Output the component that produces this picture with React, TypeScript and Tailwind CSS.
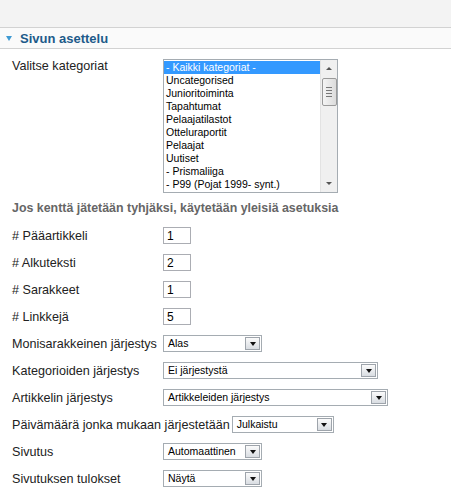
import React from "react";

const categories = [
  "- Kaikki kategoriat -",
  "Uncategorised",
  "Junioritoiminta",
  "Tapahtumat",
  "Pelaajatilastot",
  "Otteluraportit",
  "Pelaajat",
  "Uutiset",
  "- Prismaliiga",
  "- P99 (Pojat 1999- synt.)",
];

function Row({ label, children }: { label: string; children: React.ReactNode }) {
  return (
    <div className="flex h-[27px] items-center pl-3">
      <span className="min-w-[151px] pr-[2px] text-[12.6px] leading-[14px] text-[#222]">{label}</span>
      {children}
    </div>
  );
}

function NumberInput({ value }: { value: string }) {
  return (
    <div className="flex h-[17px] w-[28px] items-center border border-[#abadb3] bg-white pl-[3px] text-[12px] text-black">
      {value}
    </div>
  );
}

function Select({ value, className }: { value: string; className: string }) {
  return (
    <div className={`flex h-[17px] items-center border border-[#a5acb2] bg-white ${className}`}>
      <span className="flex-1 pl-[4px] text-[10.5px] leading-[13px] text-black">{value}</span>
      <span className="mr-[1px] flex h-[13px] w-[15px] items-center justify-center border border-[#9ea4ab] bg-gradient-to-b from-[#fbfbfb] to-[#d9dde2]">
        <span className="block h-0 w-0 border-x-[3.5px] border-t-[4px] border-x-transparent border-t-[#111]" />
      </span>
    </div>
  );
}

function ListBox() {
  return (
    <div className="flex h-[134px] w-[175px] border border-[#a5acb2] bg-white">
      <div className="flex-1 pt-[1px]">
        {categories.map((c, i) => (
          <div
            key={c}
            className={`h-[13px] pl-[2px] text-[10.5px] leading-[13px] ${
              i === 0 ? "bg-[#3399ff] text-white" : "text-black"
            }`}
          >
            {c}
          </div>
        ))}
      </div>
      {/* vertical scrollbar */}
      <div className="flex w-[17px] flex-col items-center bg-[#f0f0f0] border-l border-[#e3e3e3]">
        <div className="flex h-[17px] items-center justify-center">
          <span className="block h-0 w-0 border-x-[3px] border-b-[3px] border-x-transparent border-b-[#555]" />
        </div>
        <div className="mt-[1px] flex h-[28px] w-[15px] flex-col items-center justify-center gap-[2px] rounded-[2px] border border-[#9a9a9a] bg-gradient-to-r from-[#f4f4f4] to-[#dcdcdc]">
          <span className="block h-px w-[6px] bg-[#777]" />
          <span className="block h-px w-[6px] bg-[#777]" />
          <span className="block h-px w-[6px] bg-[#777]" />
          <span className="block h-px w-[6px] bg-[#777]" />
        </div>
        <div className="flex-1" />
        <div className="flex h-[17px] items-center justify-center">
          <span className="block h-0 w-0 border-x-[3px] border-t-[3px] border-x-transparent border-t-[#555]" />
        </div>
      </div>
    </div>
  );
}

export default function App() {
  return (
    <div className="h-[502px] w-[451px] bg-white font-['Liberation_Sans',Arial,sans-serif]">
      <div className="h-[28px] border-b border-[#d2d2d2] bg-[#f3f3f3]" />
      <div className="flex h-[21px] items-center border-b border-[#d2d2d2] bg-[#fafafa] pl-[6px]">
        <span className="block h-0 w-0 border-x-[3px] border-t-[5px] border-x-transparent border-t-[#3f9ad3]" />
        <span className="ml-[8px] text-[13px] font-bold leading-[15px] text-[#1d5a8a]">Sivun asettelu</span>
      </div>

      <div className="flex pl-3 pt-[10px]">
        <span className="min-w-[151px] text-[12.6px] leading-[14px] text-[#222]">Valitse kategoriat</span>
        <ListBox />
      </div>

      <div className="flex h-[29px] items-center pl-3">
        <span className="text-[12.4px] font-bold leading-[14px] text-[#666]">
          Jos kenttä jätetään tyhjäksi, käytetään yleisiä asetuksia
        </span>
      </div>

      <Row label="# Pääartikkeli">
        <NumberInput value="1" />
      </Row>
      <Row label="# Alkuteksti">
        <NumberInput value="2" />
      </Row>
      <Row label="# Sarakkeet">
        <NumberInput value="1" />
      </Row>
      <Row label="# Linkkejä">
        <NumberInput value="5" />
      </Row>

      <Row label="Monisarakkeinen järjestys">
        <Select value="Alas" className="w-[99px]" />
      </Row>
      <Row label="Kategorioiden järjestys">
        <Select value="Ei järjestystä" className="w-[215px]" />
      </Row>
      <Row label="Artikkelin järjestys">
        <Select value="Artikkeleiden järjestys" className="w-[225px]" />
      </Row>
      <Row label="Päivämäärä jonka mukaan järjestetään">
        <Select value="Julkaistu" className="w-[102px]" />
      </Row>
      <Row label="Sivutus">
        <Select value="Automaattinen" className="w-[99px]" />
      </Row>
      <Row label="Sivutuksen tulokset">
        <Select value="Näytä" className="w-[99px]" />
      </Row>
    </div>
  );
}
